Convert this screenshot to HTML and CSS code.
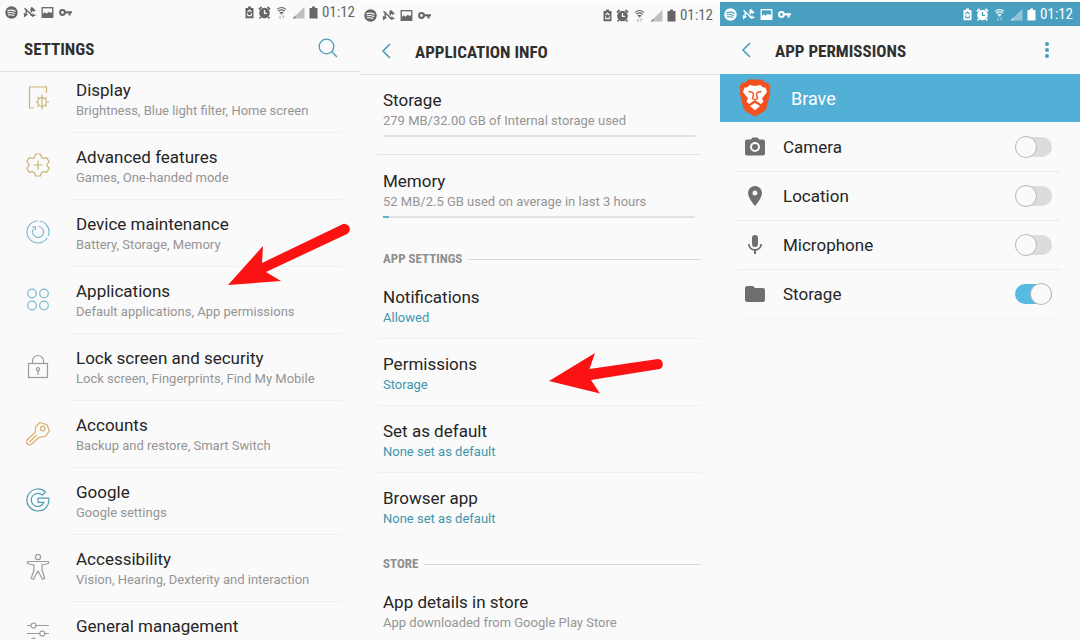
FILE: index.html
```html
<!DOCTYPE html>
<html lang="en">
<head>
    <meta charset="UTF-8">
    <meta name="viewport" content="width=device-width, initial-scale=1.0">
    <title>App permissions</title>
    <link rel="stylesheet" href="styles.css">
</head>
<body>
    <!-- shared icons -->
    <svg class="sprite" aria-hidden="true">
        <symbol id="spotify" viewBox="0 0 13 13">
            <circle cx="6.5" cy="6.5" r="6.2" fill="currentColor"/>
            <path d="M2.8 4.6c2.6-.8 5.2-.6 7.5.6M3.1 6.8c2.3-.6 4.4-.4 6.5.6M3.5 8.9c1.900-.4 3.600-.3 5.300.6" fill="none" stroke="var(--bar)" stroke-width="1.1" stroke-linecap="round"/>
        </symbol>
        <symbol id="nearby" viewBox="0 0 13 13">
            <path d="M3.200 3v5.500M1.500 2.300l8.500 8M8.300 1.500v5" fill="none" stroke="currentColor" stroke-width="1.400"/>
            <path d="M.8 7l4.200 1.500L1 11.500zM7 4.500l2-3.700 2.500 3.200z" fill="currentColor"/>
            <path d="M8.500 4.300H12.500M10.500 2.600v3.200M7.500 9.300h5M10 7.500v3.500" fill="none" stroke="currentColor" stroke-width="1.200"/>
        </symbol>
        <symbol id="picture" viewBox="0 0 13 13">
            <rect x="1.2" y="1.7" width="10.6" height="9.6" fill="none" stroke="currentColor" stroke-width="1.3"/>
            <path d="M1.500 11V8.200l2.300-2 1.900 1.600L8 5.600l1 1.500L11.500 6v5z" fill="currentColor"/>
        </symbol>
        <symbol id="vpnkey" viewBox="0 0 13 13">
            <circle cx="3.5" cy="6.5" r="2.4" fill="none" stroke="currentColor" stroke-width="2"/>
            <path d="M6 6.2h7M10.6 6v3.4M8.4 6v1.6" fill="none" stroke="currentColor" stroke-width="2"/>
        </symbol>
        <symbol id="saver" viewBox="0 0 9 13">
            <path d="M.5 2H3V.6h3V2h2.500v10.200h-8z" fill="currentColor"/>
            <path d="M2.600 6l1.900-2 1.900 2M2.200 7.500L3 9.600h3l.8-2.100" fill="none" stroke="var(--bar)" stroke-width="1.1"/>
        </symbol>
        <symbol id="alarm" viewBox="0 0 13 13">
            <circle cx="6.500" cy="7" r="5.300" fill="currentColor"/>
            <path d="M.9 3.400L3.600 1M12.100 3.400L9.400 1M2.800 11L1.600 12.400M10.200 11l1.200 1.400" stroke="currentColor" stroke-width="1.800"/>
            <path d="M6.500 4v3.300H9" fill="none" stroke="var(--bar)" stroke-width="1.300"/>
        </symbol>
        <symbol id="wifi" viewBox="0 0 13 13">
            <path d="M2 3.300c2.800-2.300 6.200-2.300 9 0M3.300 5.200c2-1.600 4.400-1.600 6.400 0M4.700 7c1.200-.9 2.400-.9 3.600 0" fill="none" stroke="currentColor" stroke-width="1.100"/>
            <path d="M5.200 7.200h2.600L6.500 8.800z" fill="currentColor"/>
            <path d="M5.200 9.500v3M3.900 11l1.300 1.500M8 12.500v-3M9.300 11L8 9.500" stroke="currentColor" stroke-width="1" opacity=".45"/>
        </symbol>
        <symbol id="signal" viewBox="0 0 13 13">
            <path d="M12.500.8v11.700H.5z" fill="currentColor" opacity=".4"/>
            <path d="M3.500 9.600v2.900h-3z" fill="currentColor" opacity=".6"/>
        </symbol>
        <symbol id="battery" viewBox="0 0 9 13">
            <path d="M.5 2H3V.6h3V2h2.500v10.500h-8z" fill="currentColor"/>
        </symbol>
        <symbol id="back" viewBox="0 0 12 18">
            <path d="M10 2L3 9l7 7" fill="none" stroke="currentColor" stroke-width="1.600"/>
        </symbol>
    </svg>

    <main class="screens">
        <section class="screen">
            <div class="status-bar">
                <svg class="s13"><use href="#spotify"/></svg>
                <svg class="s13"><use href="#nearby"/></svg>
                <svg class="s13"><use href="#picture"/></svg>
                <svg class="s13"><use href="#vpnkey"/></svg>
                <div class="status-right">
                    <svg class="s9"><use href="#saver"/></svg>
                    <svg class="s13"><use href="#alarm"/></svg>
                    <svg class="s13"><use href="#wifi"/></svg>
                    <svg class="s13"><use href="#signal"/></svg>
                    <svg class="s9"><use href="#battery"/></svg>
                    <span class="time">01:12</span>
                </div>
            </div>
            <header class="header">
                <h1>SETTINGS</h1>
                <button class="icon-button search" type="button" aria-label="Search">
                    <svg width="20" height="20" viewBox="0 0 20 20" fill="none" stroke="currentColor" stroke-width="1.300"><circle cx="8.500" cy="8.500" r="7.300"/><path d="M13.800 13.800L19 19"/></svg>
                </button>
            </header>
            <nav class="settings">
                <a class="row" href="#display">
                    <svg class="icon gold" viewBox="0 0 26 26"><path d="M9 23H4.500V2h17v6"/><circle cx="17" cy="17" r="4.300"/><path d="M17 9.500v15M10.500 17h2M21.500 17h2.500M12.200 12.200l1.500 1.500M20.300 20.300l1.500 1.500M21.800 12.200l-1.500 1.500M13.700 20.300l-1.500 1.500"/></svg>
                    <span class="text"><span class="title">Display</span><span class="sub">Brightness, Blue light filter, Home screen</span></span>
                </a>
                <a class="row" href="#advanced">
                    <svg class="icon gold" viewBox="0 0 26 26"><path d="M10.500 2h5l.9 3.200 2.200 1.300 3.200-.8 2.400 4.200-2.200 2.300v1.600l2.200 2.300-2.400 4.200-3.200-.8-2.200 1.300-.9 3.200h-5l-.9-3.200-2.200-1.300-3.200.8-2.400-4.200L4 13.800v-1.600L1.800 9.900l2.400-4.200 3.200.8 2.200-1.300z" stroke-linejoin="round"/><path d="M13 8.500v9M8.500 13h9"/></svg>
                    <span class="text"><span class="title">Advanced features</span><span class="sub">Games, One-handed mode</span></span>
                </a>
                <a class="row" href="#maintenance">
                    <svg class="icon teal" viewBox="0 0 26 26"><path d="M14.500 2a11 11 0 0 1 8.700 15M22.300 18.800A11 11 0 1 1 12.500 2"/><path d="M13.500 7.500a5.500 5.500 0 1 1-5 2.500M7.300 8.200l3-.2.200 3"/></svg>
                    <span class="text"><span class="title">Device maintenance</span><span class="sub">Battery, Storage, Memory</span></span>
                </a>
                <a class="row" href="#applications">
                    <svg class="icon teal" viewBox="0 0 26 26"><circle cx="7" cy="7.500" r="4.300"/><circle cx="19" cy="7.500" r="4.300"/><circle cx="7" cy="19.500" r="4.300"/><circle cx="19" cy="19.500" r="4.300"/></svg>
                    <span class="text"><span class="title">Applications</span><span class="sub">Default applications, App permissions</span></span>
                </a>
                <a class="row" href="#security">
                    <svg class="icon gray" viewBox="0 0 26 26"><rect x="3.500" y="10.500" width="19" height="14"/><path d="M7.500 10.500V8a5.500 5.500 0 0 1 11 0v2.500M13 18v4"/><circle cx="13" cy="16.300" r="1.600"/></svg>
                    <span class="text"><span class="title">Lock screen and security</span><span class="sub">Lock screen, Fingerprints, Find My Mobile</span></span>
                </a>
                <a class="row" href="#accounts">
                    <svg class="icon amber" viewBox="0 0 26 26" stroke-linejoin="round"><path d="M15 2.500l7 2.200 2.500 6.500L20 16.500l-6 .8-7.500 7-3 .7-2-2 .5-3L10 12.500l.8-6z"/><circle cx="17.800" cy="8.500" r="2.300"/><path d="M4.500 22l7-7"/></svg>
                    <span class="text"><span class="title">Accounts</span><span class="sub">Backup and restore, Smart Switch</span></span>
                </a>
                <a class="row" href="#google">
                    <svg class="icon teal dark" viewBox="0 0 26 26" stroke-linejoin="round"><path d="M13 11.200h10.800c.8 7.300-4 12.800-10.800 12.800a11 11 0 1 1 7.500-19l-3.100 3.100A6.600 6.600 0 1 0 19 15.300h-6z"/></svg>
                    <span class="text"><span class="title">Google</span><span class="sub">Google settings</span></span>
                </a>
                <a class="row" href="#accessibility">
                    <svg class="icon gray" viewBox="0 0 26 26" stroke-linejoin="round"><circle cx="13" cy="3" r="2.600"/><path d="M2.500 7.500h21v2L17 11v5l2.800 8.500-2.300.8L13 17l-4.500 8.300-2.300-.8L9 16v-5L2.500 9.500z"/></svg>
                    <span class="text"><span class="title">Accessibility</span><span class="sub">Vision, Hearing, Dexterity and interaction</span></span>
                </a>
                <a class="row" href="#general">
                    <svg class="icon half gray" viewBox="0 0 26 18"><path d="M2 4.500h4M11 4.500h13M2 12.500h12.500M20 12.500h4"/><circle cx="8.500" cy="4.500" r="2.500"/><circle cx="17.300" cy="12.500" r="2.500"/><path d="M6.500 18a2.500 2.500 0 0 1 4 0"/></svg>
                    <span class="text"><span class="title">General management</span></span>
                </a>
            </nav>
            <svg class="arrow arrow-apps" width="124" height="64" viewBox="0 0 124 64" aria-hidden="true"><path d="M1 63L36 24l-1 17 80-38.500a5.300 5.300 0 0 1 5 9.500L39 50l15 9z"/></svg>
        </section>

        <section class="screen info">
            <div class="status-bar">
                <svg class="s13"><use href="#spotify"/></svg>
                <svg class="s13"><use href="#nearby"/></svg>
                <svg class="s13"><use href="#picture"/></svg>
                <svg class="s13"><use href="#vpnkey"/></svg>
                <div class="status-right">
                    <svg class="s9"><use href="#saver"/></svg>
                    <svg class="s13"><use href="#alarm"/></svg>
                    <svg class="s13"><use href="#wifi"/></svg>
                    <svg class="s13"><use href="#signal"/></svg>
                    <svg class="s9"><use href="#battery"/></svg>
                    <span class="time">01:12</span>
                </div>
            </div>
            <header class="header">
                <button class="icon-button" type="button" aria-label="Back"><svg width="12" height="18"><use href="#back"/></svg></button>
                <h1>APPLICATION INFO</h1>
            </header>
            <div class="details">
                <a class="usage" href="#storage">
                    <span class="title">Storage</span>
                    <span class="sub">279 MB/32.00 GB of Internal storage used</span>
                    <span class="meter"></span>
                </a>
                <a class="usage" href="#memory">
                    <span class="title">Memory</span>
                    <span class="sub">52 MB/2.5 GB used on average in last 3 hours</span>
                    <span class="meter"><span class="meter-fill" style="width: 2%"></span></span>
                </a>
                <h2>APP SETTINGS</h2>
                <a class="item" href="#notifications"><span class="title">Notifications</span><span class="sub value">Allowed</span></a>
                <a class="item" href="#permissions"><span class="title">Permissions</span><span class="sub value">Storage</span></a>
                <a class="item" href="#default"><span class="title">Set as default</span><span class="sub value">None set as default</span></a>
                <a class="item" href="#browser"><span class="title">Browser app</span><span class="sub value">None set as default</span></a>
                <h2>STORE</h2>
                <a class="item" href="#store"><span class="title">App details in store</span><span class="sub">App downloaded from Google Play Store</span></a>
            </div>
            <svg class="arrow arrow-permissions" width="118" height="42" viewBox="0 0 118 42" aria-hidden="true"><path d="M1 29L47 1l-5.500 16L110 7a5.200 5.200 0 0 1 1.500 10L43 28l9 13.500z"/></svg>
        </section>

        <section class="screen permissions">
            <div class="status-bar">
                <svg class="s13"><use href="#spotify"/></svg>
                <svg class="s13"><use href="#nearby"/></svg>
                <svg class="s13"><use href="#picture"/></svg>
                <svg class="s13"><use href="#vpnkey"/></svg>
                <div class="status-right">
                    <svg class="s9"><use href="#saver"/></svg>
                    <svg class="s13"><use href="#alarm"/></svg>
                    <svg class="s13"><use href="#wifi"/></svg>
                    <svg class="s13"><use href="#signal"/></svg>
                    <svg class="s9"><use href="#battery"/></svg>
                    <span class="time">01:12</span>
                </div>
            </div>
            <header class="header">
                <button class="icon-button" type="button" aria-label="Back"><svg width="12" height="18"><use href="#back"/></svg></button>
                <h1>APP PERMISSIONS</h1>
                <button class="icon-button more" type="button" aria-label="More options">
                    <svg width="6" height="18" viewBox="0 0 6 18" fill="currentColor"><circle cx="3" cy="3" r="2"/><circle cx="3" cy="9" r="2"/><circle cx="3" cy="15" r="2"/></svg>
                </button>
            </header>
            <div class="app-name">
                <svg width="32" height="38" viewBox="0 0 32 38">
                    <path d="M9 .5h14l3 3.300 3-.3 2.700 5-1.200 3 .8 2.500-3.500 14c-.8 2.800-2 3.800-4 5.300L16 37.500l-7.800-4.200c-2-1.500-3.200-2.500-4-5.300L.7 14l.8-2.500-1.200-3L3 3.500l3 .3z" fill="#f4511e"/>
                    <path d="M10.500 6L16 7l5.500-1L24 8.500l2.500 0 1.500 4.500-5 6.500 1.500 3-2.500 2.500-5-3.200h-2L10 25l-2.500-2.500 1.500-3L4 13l1.500-4.500H8z" fill="#fff"/>
                    <path d="M11 27l5-3 5 3-5 4.300z" fill="#fff"/>
                    <path d="M9.500 12.500l4 .8 1 1.500-1 4.700L16 21l2.500-1.500-1-4.700 1-1.500 4-.8" fill="none" stroke="#f4511e" stroke-width="1.400"/>
                </svg>
                <span>Brave</span>
            </div>
            <div class="permission-list">
                <div class="permission">
                    <svg width="24" height="24" viewBox="0 0 24 24"><path d="M4 4.500h3.800L9.500 2.500h5l1.700 2H20a2 2 0 0 1 2 2v12a2 2 0 0 1-2 2H4a2 2 0 0 1-2-2v-12a2 2 0 0 1 2-2z"/><circle cx="12" cy="12" r="4" fill="none" stroke="#fafafa" stroke-width="2"/></svg>
                    <label for="camera">Camera</label>
                    <input type="checkbox" role="switch" id="camera">
                </div>
                <div class="permission">
                    <svg width="24" height="24" viewBox="0 0 24 24"><path d="M12 2a7 7 0 0 0-7 7c0 5.250 7 13 7 13s7-7.750 7-13a7 7 0 0 0-7-7zm0 9.500a2.500 2.500 0 1 1 0-5 2.500 2.500 0 0 1 0 5z"/></svg>
                    <label for="location">Location</label>
                    <input type="checkbox" role="switch" id="location">
                </div>
                <div class="permission">
                    <svg width="24" height="24" viewBox="0 0 24 24"><path d="M12 14a3 3 0 0 0 3-3V5a3 3 0 0 0-6 0v6a3 3 0 0 0 3 3zm5.300-3c0 3-2.540 5.100-5.300 5.100S6.700 14 6.700 11H5c0 3.410 2.720 6.230 6 6.720V21h2v-3.280c3.280-.48 6-3.300 6-6.720z"/></svg>
                    <label for="microphone">Microphone</label>
                    <input type="checkbox" role="switch" id="microphone">
                </div>
                <div class="permission">
                    <svg width="24" height="24" viewBox="0 0 24 24"><path d="M10 4H4a2 2 0 0 0-2 2v12a2 2 0 0 0 2 2h16a2 2 0 0 0 2-2V8a2 2 0 0 0-2-2h-8z"/></svg>
                    <label for="storage-permission">Storage</label>
                    <input type="checkbox" role="switch" id="storage-permission" checked>
                </div>
            </div>
        </section>
    </main>
</body>
</html>
```

FILE: styles.css
```css
body {
    margin: 0;
    background: #fff;
    font-family: Roboto, "Liberation Sans", sans-serif;
    color: #252525;
}
.sprite {
    display: none;
}
a {
    color: inherit;
    text-decoration: none;
}
h1, h2 {
    margin: 0;
    font-family: "Roboto Condensed", Roboto, sans-serif;
    font-weight: bold;
}
.screens {
    display: grid;
    grid-template-columns: repeat(3, 1fr);
}
.screen {
    --bar: #fafafa;
    position: relative;
    background: #fafafa;
}
.info {
    margin-top: 3px;
}
.permissions {
    --bar: #489fc0;
    margin-top: 2px;
}

/* status bar */
.status-bar {
    display: flex;
    align-items: center;
    gap: 5px;
    height: 24px;
    padding: 0 5px;
    background: var(--bar);
    color: #666;
}
.info .status-bar,
.permissions .status-bar {
    padding: 0 7px 0 4px;
}
.permissions .status-bar {
    color: #fff;
}
.s13 {
    width: 13px;
    height: 13px;
}
.s9 {
    width: 9px;
    height: 13px;
}
.status-right {
    display: flex;
    align-items: center;
    gap: 4px;
    margin-left: auto;
}
.time {
    font-family: "Roboto Condensed", Roboto, sans-serif;
    font-size: 15px;
    line-height: 24px;
}

/* title bar */
.header {
    display: flex;
    align-items: center;
    height: 47px;
    padding: 0 22px 0 24px;
    border-bottom: 1px solid #e0e0e0;
}
.info .header,
.permissions .header {
    padding-left: 20px;
}
.header h1 {
    padding-top: 2px;
    font-size: 17px;
    line-height: 24px;
    color: #303030;
}
.icon-button {
    display: flex;
    padding: 0;
    border: none;
    background: none;
    color: #4a9db5;
    cursor: pointer;
}
.icon-button + h1 {
    margin-left: 23px;
}
.search,
.more {
    margin-left: auto;
}
.more {
    margin-right: 8px;
}

.title {
    display: block;
    font-size: 17px;
    line-height: 20px;
}
.sub {
    display: block;
    font-size: 13px;
    line-height: 22px;
    color: #959595;
}
.value {
    color: #4096ad;
}

/* settings list */
.row {
    display: flex;
    padding-right: 17px;
}
.icon {
    flex: none;
    width: 26px;
    height: 26px;
    margin: 19px 19px 0 25px;
    fill: none;
    stroke: currentColor;
    stroke-width: 1.2;
}
.half {
    height: 18px;
}
.gold {
    color: #c9b272;
}
.teal {
    color: #7cb9cf;
}
.dark {
    color: #4e9db5;
}
.amber {
    color: #dcae6c;
}
.gray {
    color: #9b9b9b;
}
.text {
    flex: 1;
    padding: 14px 0 10px 6px;
    border-bottom: 1px solid #f0f0f0;
}
.row:first-child .icon {
    margin-top: 13px;
}
.row:first-child .text {
    padding-top: 8px;
}
.row:last-child .text {
    padding-bottom: 4px;
    border-bottom: none;
}

/* application info */
.details {
    padding: 0 19px 0 17px;
}
.usage {
    display: block;
    padding: 15px 6px 16px;
}
.usage + .usage {
    padding: 16px 6px 15px;
    border-top: 1px solid #e4e4e4;
}
.meter {
    display: block;
    height: 2px;
    margin: 3px 0 1px;
    background: #e2e2e2;
}
.meter-fill {
    display: block;
    height: 2px;
    background: #62aecb;
}
h2 {
    display: flex;
    align-items: center;
    gap: 6px;
    padding: 16px 0 4px 6px;
    font-size: 13px;
    line-height: 18px;
    color: #8e8e8e;
}
h2::after {
    content: "";
    flex: 1;
    height: 1px;
    background: #dadada;
}
.item {
    display: block;
    padding: 15px 6px 9px;
}
.item + .item {
    border-top: 1px solid #f0f0f0;
}
.item:last-child {
    padding-bottom: 5px;
}

/* app permissions */
.permissions .header {
    border-bottom-color: #fafafa;
}
.app-name {
    display: flex;
    align-items: center;
    gap: 20px;
    height: 48px;
    padding-left: 19px;
    background: #52afd5;
    color: #fff;
    font-size: 18px;
}
.permission-list {
    padding: 1px 19px 0 17px;
}
.permission {
    display: flex;
    align-items: center;
    height: 48px;
    padding: 0 9px 0 6px;
    border-bottom: 1px solid #ebebeb;
}
.permission:last-child {
    border-bottom-color: #f4f4f4;
}
.permission svg {
    fill: #6f6f6f;
}
.permission label {
    flex: 1;
    margin-left: 16px;
    font-size: 17px;
}
.permission input {
    appearance: none;
    position: relative;
    width: 37px;
    height: 20px;
    margin: 0;
    border-radius: 10px;
    background: #dcdcdc;
}
.permission input::after {
    content: "";
    position: absolute;
    top: -1px;
    left: 0;
    box-sizing: border-box;
    width: 22px;
    height: 22px;
    border: 1px solid #b9b9b9;
    border-radius: 50%;
    background: #fafafa;
}
.permission input:checked {
    background: #55bbe0;
}
.permission input:checked::after {
    left: auto;
    right: 0;
}

/* pointers over the lists */
.arrow {
    position: absolute;
    fill: #fb1313;
    pointer-events: none;
}
.arrow-apps {
    top: 222px;
    left: 227px;
}
.arrow-permissions {
    top: 349px;
    left: 188px;
}
```
